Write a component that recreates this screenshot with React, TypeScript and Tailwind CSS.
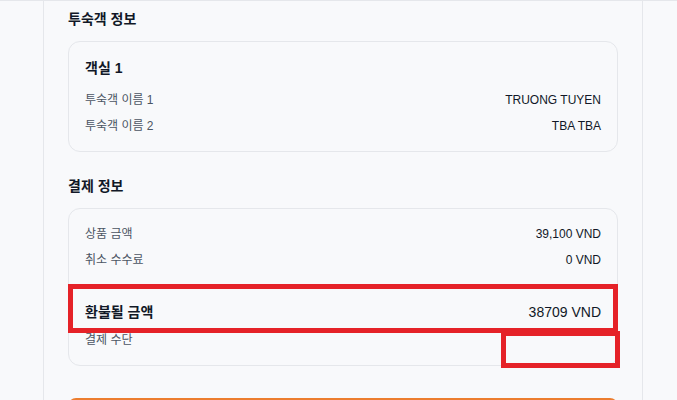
const guests = [
  { label: '투숙객 이름 1', value: 'TRUONG TUYEN' },
  { label: '투숙객 이름 2', value: 'TBA TBA' },
];

const payments = [
  { label: '상품 금액', value: '39,100 VND' },
  { label: '취소 수수료', value: '0 VND' },
];

const font = {
  fontFamily: '"Liberation Sans", Arial, "Noto Sans CJK KR", sans-serif',
};

function Row({ label, value }: { label: string; value: string }) {
  return (
    <div className="flex h-[18px] items-center justify-between text-[12px] leading-[18px]">
      <span className="text-[#4b5563]">{label}</span>
      <span className="text-[#111827]">{value}</span>
    </div>
  );
}

export default function App() {
  return (
    <div
      className="h-[400px] w-[677px] overflow-hidden border-t border-[#e5e7eb] bg-[#f8f9fb]"
      style={font}
    >
      <div className="ml-[43px] h-full w-[600px] border-x border-[#e5e7eb] bg-[#f8f9fb] px-6 pt-2">
        <h2 className="mb-3 text-[14px] font-bold leading-5 text-[#111827]">투숙객 정보</h2>
        <div className="rounded-xl border border-[#e5e7eb] bg-[#f8f9fb] p-4">
          <h3 className="mb-[13px] text-[14px] font-bold leading-5 text-[#111827]">객실 1</h3>
          <div className="flex flex-col gap-2">
            {guests.map((g) => (
              <Row key={g.label} {...g} />
            ))}
          </div>
        </div>

        <h2 className="mb-3 mt-6 text-[14px] font-bold leading-5 text-[#111827]">결제 정보</h2>
        <div className="relative rounded-xl border border-[#e5e7eb] bg-[#f8f9fb] p-4">
          <div className="flex flex-col gap-2">
            {payments.map((p) => (
              <Row key={p.label} {...p} />
            ))}
          </div>
          <div className="mt-4 border-t border-[#e5e7eb] pt-4">
            <div className="flex h-5 items-center justify-between text-[14px] leading-5">
              <span className="font-bold text-[#111827]">환불될 금액</span>
              <span className="text-[#111827]">38709 VND</span>
            </div>
            <div className="mt-[9px]">
              <Row label="결제 수단" value="" />
            </div>
          </div>

          {/* annotation boxes drawn over the card */}
          <div className="pointer-events-none absolute left-[-1px] top-[75px] h-[49px] w-[550px] border-[5px] border-[#e52228]" />
          <div className="pointer-events-none absolute left-[432px] top-[122px] h-[37px] w-[119px] border-[5px] border-[#e52228]" />
        </div>

        <button
          type="button"
          aria-label="환불 요청"
          className="mt-8 h-10 w-full rounded-lg bg-[#ec7d2f]"
        />
      </div>
    </div>
  );
}
